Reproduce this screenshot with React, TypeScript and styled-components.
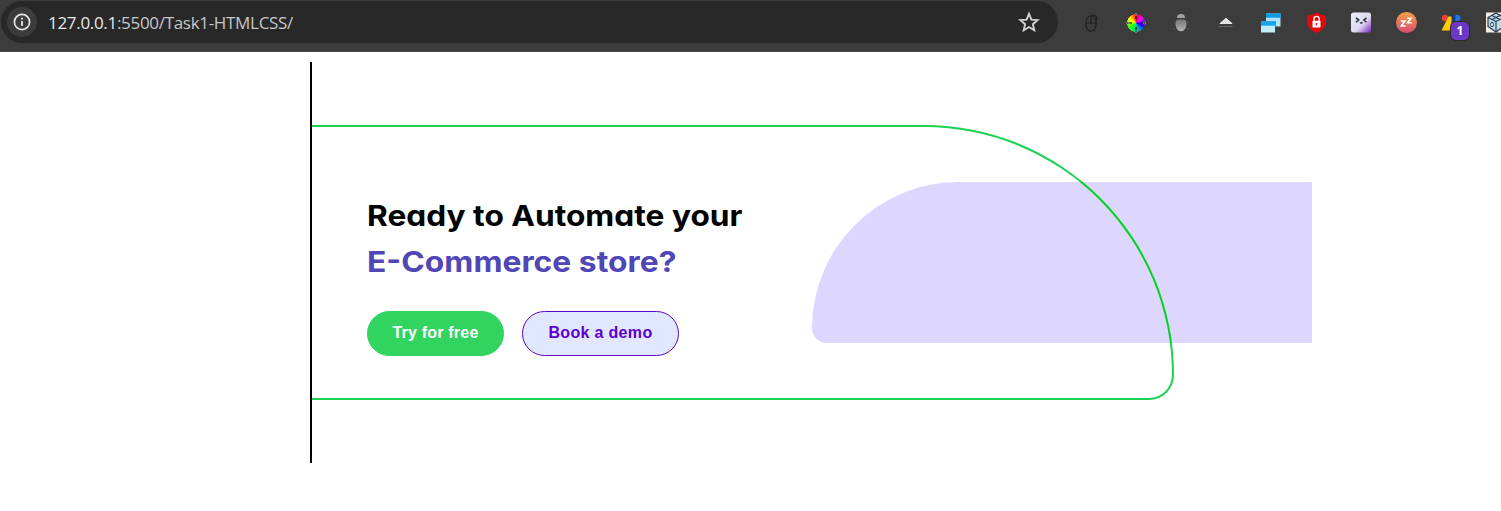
import React from 'react';
import styled, { createGlobalStyle } from 'styled-components';

const GlobalStyle = createGlobalStyle`
  *, *::before, *::after { box-sizing: border-box; }
  body { margin: 0; background: #fff; overflow: hidden; }
`;

const Toolbar = styled.header`
  display: flex;
  align-items: flex-start;
  width: 1501px;
  height: 52px;
  overflow: hidden;
  background: #3c3c3c;
  border-bottom: 1px solid #4a494a;
`;

const AddressBar = styled.div`
  display: flex;
  align-items: center;
  flex: none;
  width: 1057px;
  height: 42px;
  margin: 1px 0 0 1px;
  padding: 0 18px 0 6px;
  border-radius: 21px;
  background: #282828;
`;

const SiteInfo = styled.span`
  display: grid;
  place-items: center;
  width: 30px;
  height: 30px;
  border-radius: 50%;
  background: #3c3c3c;
`;

const Url = styled.span`
  flex: 1;
  padding: 1px 0 0 11px;
  color: #c7c7c7;
  font: 400 17px/24px 'Open Sans', 'Noto Sans', sans-serif;
  letter-spacing: -0.31px;
  white-space: nowrap;
`;

const Host = styled.span`
  color: #e8e8e8;
`;

const Extensions = styled.div`
  display: flex;
  flex: none;
  gap: 21px;
  margin: 11px 0 0 21px;
`;

const ExtensionIcon = styled.svg`
  display: block;
  flex: none;
  width: 24px;
  height: 24px;
  overflow: visible;
`;

const ColorWheel = styled.div`
  display: grid;
  place-items: center;
  width: 24px;
  height: 24px;
  background: radial-gradient(circle, transparent 8.6px, #3c3c3c 9.2px),
    conic-gradient(#f00, #f0f 45deg, #20f 110deg, #09c 150deg, #0f4 205deg, #5f0 250deg, #ff0 300deg, #f80 335deg, #f00);
`;

const Badged = styled.div`
  position: relative;
  width: 24px;
  height: 24px;
`;

const Badge = styled.span`
  position: absolute;
  left: 12px;
  top: 11px;
  width: 18px;
  height: 18px;
  border-radius: 5px;
  background: #6b38c8;
  box-shadow: 0 0 0 1px #30291f;
  color: #fff;
  font: 700 12px/18px 'Open Sans', sans-serif;
  text-align: center;
`;

const Hero = styled.main`
  position: relative;
  width: 1002px;
  height: 401px;
  margin: 10px 0 0 310px;
  padding-top: 63px;
  border-left: 2px solid #000;
`;

const Frame = styled.section`
  width: 862px;
  height: 275px;
  padding: 66px 0 0 55px;
  border: 2px solid #1cd151;
  border-left: 0;
  border-radius: 0 250px 25px 0;
`;

const Panel = styled.div`
  position: absolute;
  left: 500px;
  top: 120px;
  width: 500px;
  height: 161px;
  overflow: hidden;
  border-radius: 146.4px 0 0 14.6px;
  background: #ddd6fe;
`;

const PanelArc = styled.div`
  position: absolute;
  top: -57px;
  left: -500px;
  width: 862px;
  height: 275px;
  border: 2px solid #00d41c;
  border-left: 0;
  border-radius: 0 250px 25px 0;
`;

const Heading = styled.h1`
  margin: 0;
  color: #000;
  font: 700 29px/46px Inter, sans-serif;
  font-feature-settings: 'cv11';
  white-space: nowrap;
`;

const HeadingLine = styled.span<{ $accent?: boolean; $stretch: number }>`
  display: block;
  width: max-content;
  color: ${({ $accent }) => ($accent ? '#5046b5' : '#000')};
  transform: scaleX(${({ $stretch }) => $stretch});
  transform-origin: left;
`;

const Actions = styled.div`
  display: flex;
  gap: 18px;
  margin-top: 26px;
`;

const PillButton = styled.button<{ $outlined?: boolean }>`
  width: ${({ $outlined }) => ($outlined ? 157 : 137)}px;
  height: 45px;
  padding: 0 0 2px;
  border: 1px solid ${({ $outlined }) => ($outlined ? '#5b08cc' : '#30d45f')};
  border-radius: 23px;
  background: ${({ $outlined }) => ($outlined ? '#e0e7ff' : '#30d45f')};
  color: ${({ $outlined }) => ($outlined ? '#5f00cf' : '#fff')};
  font: 700 16px/18px 'Liberation Sans', Arial, sans-serif;
  letter-spacing: ${({ $outlined }) => ($outlined ? 0.32 : 0.2)}px;
  white-space: nowrap;
`;

export default function App() {
  return (
    <>
      <GlobalStyle />
      <Toolbar>
        <AddressBar>
          <SiteInfo>
            <svg width="18" height="18" viewBox="0 0 18 18">
              <circle cx="9" cy="9" r="7.6" fill="none" stroke="#e5e5e5" strokeWidth="1.7" />
              <path d="M9 8v5M9 4.8v1.8" stroke="#e5e5e5" strokeWidth="1.8" />
            </svg>
          </SiteInfo>
          <Url><Host>127.0.0.1</Host>:5500/Task1-HTMLCSS/</Url>
          <svg width="22" height="22" viewBox="0 0 22 22">
            <path d="M11 2.8l2.4 5.8 6.2.5-4.7 4.1 1.4 6.1-5.3-3.3-5.3 3.3 1.4-6.1L2.4 9.1l6.2-.5z" fill="none" stroke="#d0d0d0" strokeWidth="1.9" />
          </svg>
        </AddressBar>
        <Extensions>
          <ExtensionIcon viewBox="0 0 24 24" fill="none" stroke="#1c1c1c" strokeWidth="1.1">
            <ellipse cx="12" cy="12.5" rx="5.2" ry="7.8" />
            <path d="M6.8 12h10.4M12 5v7M13 4c4-.5 5.500 2.500 4.700 6" />
          </ExtensionIcon>
          <ColorWheel>
            <ExtensionIcon viewBox="0 0 24 24" fill="none">
              <path d="M12 3v5M12 16v5M3 12h5M16 12h5" stroke="#111" strokeWidth="1.2" />
              <path d="M12 2l-1 1.500L12 5l1-1.500zM12 19l-1 1.500 1 1.500 1-1.500zM2 12l1.500-1L5 12l-1.500 1zM19 12l1.500-1 1.500 1-1.500 1z" fill="#222" stroke="#bbb" strokeWidth=".6" />
            </ExtensionIcon>
          </ColorWheel>
          <ExtensionIcon viewBox="0 0 24 24">
            <defs>
              <linearGradient id="body" x2="0" y2="1"><stop stopColor="#747474" /><stop offset="1" stopColor="#b5b5b5" /></linearGradient>
            </defs>
            <path d="M8 7q0-4 4-4t4 4z" fill="#a3a3a3" />
            <path d="M8 8.500h8q2.500 3 1 7.500-1.500 4.200-5 4.200T7 16q-1.500-4.500 1-7.500z" fill="url(#body)" />
            <path d="M5 11h1M18 11h1M4.500 17.500h1M18.500 17.500h1" stroke="#686868" />
          </ExtensionIcon>
          <ExtensionIcon viewBox="0 0 24 24">
            <path d="M5.500 13l1.500-2 2.500-2 2.500-2.200 2.500 2.200 2.500 2 1.500 2z" fill="#f1f1f1" />
            <path d="M9 10v3M11 9v4M13 9v4M15 10v3" stroke="#aaa" strokeWidth=".5" />
            <path d="M5 15.500h14" stroke="#757575" strokeWidth="1.100" strokeDasharray="1.200 .5" />
          </ExtensionIcon>
          <ExtensionIcon viewBox="0 0 24 24">
            <path d="M7 2.500h14.500v13H7z" fill="#aee4fb" /><path d="M7 2.500h14.500v4.200H7z" fill="#079be8" />
            <path d="M1.500 10h15v12h-15z" fill="#3c3c3c" />
            <path d="M2 10.500h14v11H2z" fill="#c2ebfb" /><path d="M2 10.500h14v4.200H2z" fill="#10a5f0" />
          </ExtensionIcon>
          <ExtensionIcon viewBox="0 0 24 24">
            <path d="M12.500 1.500q4.500 3 9.500 3v6q0 7-9.500 11.500Q3 17.500 3 10.500v-6q5 0 9.500-3z" fill="#e20a0a" />
            <path d="M10 10V8a2.600 2.600 0 015.200 0v2" fill="none" stroke="#fff" strokeWidth="1.400" />
            <rect x="8.500" y="9.800" width="8" height="6.600" rx=".7" fill="#fff" />
            <path d="M12.500 12v2.300" stroke="#e20a0a" strokeWidth="1.400" />
          </ExtensionIcon>
          <ExtensionIcon viewBox="0 0 24 24">
            <defs>
              <linearGradient id="face" x2="1" y2="1"><stop stopColor="#e8eefb" /><stop offset=".58" stopColor="#e0daef" /><stop offset="1" stopColor="#7826c0" /></linearGradient>
            </defs>
            <rect x="2" y="1.500" width="20" height="20" rx="2.500" fill="url(#face)" />
            <path d="M7 6.800l2.700 2.200L7 11.200M17.500 6.800L14.800 9l2.700 2.200M11 11.500q1.300 1 2.600 0" fill="none" stroke="#202536" strokeWidth="1.500" />
          </ExtensionIcon>
          <ExtensionIcon viewBox="0 0 24 24">
            <defs>
              <linearGradient id="sleep" x2="0" y2="1"><stop stopColor="#f5a044" /><stop offset="1" stopColor="#d84b74" /></linearGradient>
            </defs>
            <circle cx="12.500" cy="11.500" r="10.500" fill="url(#sleep)" />
            <path d="M6.800 10H11l-3.700 5h4.400M13 7.300h4l-3.500 4.500h4.300" fill="none" stroke="#fff" strokeWidth="1.600" />
          </ExtensionIcon>
          <Badged>
            <ExtensionIcon viewBox="0 0 24 24">
              <circle cx="6" cy="7" r="3.200" fill="#ee4037" />
              <path d="M9.500 5.500h3v14H2.500z" fill="#ffca09" />
              <rect x="13" y="4" width="8.500" height="6" rx="3" fill="#2377ee" /><path d="M13 4h3.500v6h-3.500z" fill="#173f80" />
            </ExtensionIcon>
            <Badge>1</Badge>
          </Badged>
          <ExtensionIcon viewBox="0 0 24 24">
            <path d="M2 1.500h21v20H2z" fill="#f6eee6" />
            <path d="M12 2l8 4.500v9L12 21l-8-5.500v-9z" fill="#b6dcec" stroke="#29344e" strokeWidth="1.200" />
            <path d="M4 6.500l8 4 8-4M12 10.500V21M8 4.500l8 4M16 4.500l-8 4" fill="none" stroke="#29344e" strokeWidth="1.100" />
            <ellipse cx="8" cy="13.500" rx="1.500" ry="2.200" fill="#f6eee6" stroke="#29344e" />
          </ExtensionIcon>
        </Extensions>
      </Toolbar>
      <Hero>
        <Frame>
          <Heading>
            <HeadingLine $stretch={1.092}>Ready to Automate your</HeadingLine>
            <HeadingLine $accent $stretch={1.098}>E-Commerce store?</HeadingLine>
          </Heading>
          <Actions>
            <PillButton>Try for free</PillButton>
            <PillButton $outlined>Book a demo</PillButton>
          </Actions>
        </Frame>
        <Panel><PanelArc /></Panel>
      </Hero>
    </>
  );
}
